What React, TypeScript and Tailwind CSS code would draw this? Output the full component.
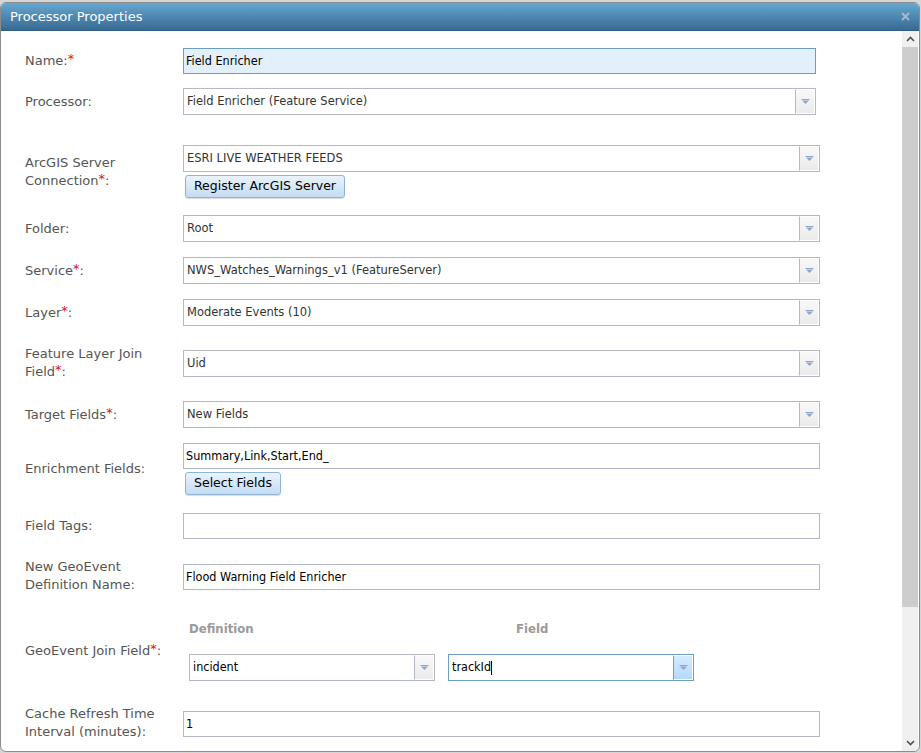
import React from "react"

const font = { fontFamily: "'DejaVu Sans', sans-serif" }
const cond = { fontFamily: "'DejaVu Sans Condensed', 'DejaVu Sans', sans-serif" }

function Req() {
  return <span className="text-[#e01010] relative -top-[2px]">*</span>
}

function Arrow({ focused }: { focused?: boolean }) {
  return (
    <div
      className={
        "w-[20px] h-full shrink-0 border-l flex items-center justify-center border-t border-r border-b " +
        (focused
          ? "border-l-[#6a9fc0] border-t-white border-r-white border-b-white bg-gradient-to-b from-[#d6ebfd] to-[#b5d9fb]"
          : "border-l-[#b5b8c8] border-t-white border-r-white border-b-white bg-gradient-to-b from-[#f8f8f8] to-[#ebebeb]")
      }
    >
      <svg width="9" height="6" viewBox="0 0 9 6">
        <rect x="0.5" y="0" width="8" height="1" fill="#8ea6cc" />
        <path d="M1 1.5 H8 L4.5 5 Z" fill="#8ea6cc" />
      </svg>
    </div>
  )
}

function Select({ value, w = "w-[637px]", focused, dark }: { value: string; w?: string; focused?: boolean; dark?: boolean }) {
  return (
    <div className={`${w} h-[27px] flex bg-white border ${focused ? "border-[#6a9fc0]" : "border-[#b5b8c8]"}`}>
      <div
        className={`flex-1 flex items-center pl-[3px] ${dark ? "text-[12.5px] text-black" : "text-[11.5px] text-[#333]"}`}
        style={dark ? cond : font}
      >
        {value}
        {focused && <span className="inline-block w-px h-[14px] bg-black" />}
      </div>
      <Arrow focused={focused} />
    </div>
  )
}

function TextInput({ value, w = "w-[637px]", active }: { value: string; w?: string; active?: boolean }) {
  return (
    <div
      className={`${w} h-[26px] flex items-center pl-[2px] text-[12.5px] text-black border ${
        active ? "bg-[#e3f0fb] border-[#6a9fc0]" : "bg-white border-[#b5b8c8]"
      }`}
      style={cond}
    >
      {value}
    </div>
  )
}

function Btn({ children }: { children: React.ReactNode }) {
  return (
    <div className="ml-[2px] mt-[3px] inline-flex h-[23px] items-center px-[8px] rounded-[3px] border border-[#8fb4d9] bg-gradient-to-b from-[#eaf3fc] to-[#c4dcf3] text-[12.5px] text-black shadow-[0_1px_1px_rgba(0,0,0,0.15)]">
      {children}
    </div>
  )
}

function Row({ label, children, className = "", labelClass = "self-center" }: { label: React.ReactNode; children: React.ReactNode; className?: string; labelClass?: string }) {
  return (
    <div className={`flex ${className}`}>
      <div className={`w-[158px] shrink-0 text-[13px] leading-[18px] text-[#555] ${labelClass}`}>{label}</div>
      <div className="flex flex-col items-start">{children}</div>
    </div>
  )
}

export default function App() {
  return (
    <div className="w-[921px] h-[753px] bg-[#d6d6d6] pt-[2px] overflow-hidden" style={font}>
      <div className="w-[920px] h-[750px] rounded-[6px] border border-[#8c8c8c] bg-white flex flex-col overflow-hidden">
        {/* title bar */}
        <div className="h-[28px] shrink-0 flex items-center justify-between pl-[9px] pr-[9px] bg-gradient-to-b from-[#66a8d2] to-[#386a92] border-b border-[#2f5d80]">
          <span className="text-white text-[13px]">Processor Properties</span>
          <svg width="9" height="9" viewBox="0 0 9 9">
            <path d="M1 1 L8 8 M8 1 L1 8" stroke="#9fbbd2" strokeWidth="2" />
          </svg>
        </div>
        <div className="flex-1 flex min-h-0">
          {/* form */}
          <div className="flex-1 pl-[24px] pt-[17px] flex flex-col">
            <Row label={<>Name:<Req /></>}>
              <TextInput value="Field Enricher" w="w-[633px]" active />
            </Row>
            <Row label="Processor:" className="mt-[14px]">
              <Select value="Field Enricher (Feature Service)" w="w-[633px]" />
            </Row>
            <Row label={<>ArcGIS Server<br />Connection<Req />:</>} className="mt-[30px]" labelClass="pt-[9px]">
              <Select value="ESRI LIVE WEATHER FEEDS" />
              <Btn>Register ArcGIS Server</Btn>
            </Row>
            <Row label="Folder:" className="mt-[17px]">
              <Select value="Root" />
            </Row>
            <Row label={<>Service<Req />:</>} className="mt-[15px]">
              <Select value="NWS_Watches_Warnings_v1 (FeatureServer)" />
            </Row>
            <Row label={<>Layer<Req />:</>} className="mt-[15px]">
              <Select value="Moderate Events (10)" />
            </Row>
            <Row label={<>Feature Layer Join<br />Field<Req />:</>} className="mt-[19px]" labelClass="">
              <div className="pt-[5px]">
                <Select value="Uid" />
              </div>
            </Row>
            <Row label={<>Target Fields<Req />:</>} className="mt-[20px]">
              <Select value="New Fields" />
            </Row>
            <Row label="Enrichment Fields:" className="mt-[15px]">
              <TextInput value="Summary,Link,Start,End_" />
              <Btn>Select Fields</Btn>
            </Row>
            <Row label="Field Tags:" className="mt-[18px]">
              <TextInput value="" />
            </Row>
            <Row label={<>New GeoEvent<br />Definition Name:</>} className="mt-[19px]" labelClass="">
              <div className="pt-[6px]">
                <TextInput value="Flood Warning Field Enricher" />
              </div>
            </Row>
            <Row label={<>GeoEvent Join Field<Req />:</>} className="mt-[26px]">
              <div className="flex pl-[6px] gap-[13px]">
                <div className="flex flex-col">
                  <div className="text-[13px] font-bold text-[#9a9a9a] h-[18px] leading-[18px]" style={cond}>Definition</div>
                  <div className="mt-[16px]">
                    <Select value="incident" w="w-[246px]" dark />
                  </div>
                </div>
                <div className="flex flex-col">
                  <div className="text-[13px] font-bold text-[#9a9a9a] h-[18px] leading-[18px] pl-[68px]" style={cond}>Field</div>
                  <div className="mt-[16px]">
                    <Select value="trackId" w="w-[246px]" focused dark />
                  </div>
                </div>
              </div>
            </Row>
            <Row label={<>Cache Refresh Time<br />Interval (minutes):</>} className="mt-[24px]" labelClass="">
              <div className="pt-[6px]">
                <TextInput value="1" />
              </div>
            </Row>
          </div>
          {/* scrollbar */}
          <div className="w-[16px] shrink-0 mr-[1px] flex flex-col bg-[#f0f0f0]">
            <div className="h-[16px] flex items-center justify-center">
              <svg width="9" height="6" viewBox="0 0 9 6">
                <path d="M1 5 L4.5 1.5 L8 5" stroke="#505050" strokeWidth="1.6" fill="none" />
              </svg>
            </div>
            <div className="h-[560px] bg-[#cdcdcd]" />
            <div className="flex-1" />
            <div className="h-[16px] flex items-center justify-center">
              <svg width="9" height="6" viewBox="0 0 9 6">
                <path d="M1 1 L4.5 4.5 L8 1" stroke="#505050" strokeWidth="1.6" fill="none" />
              </svg>
            </div>
          </div>
        </div>
      </div>
    </div>
  )
}
